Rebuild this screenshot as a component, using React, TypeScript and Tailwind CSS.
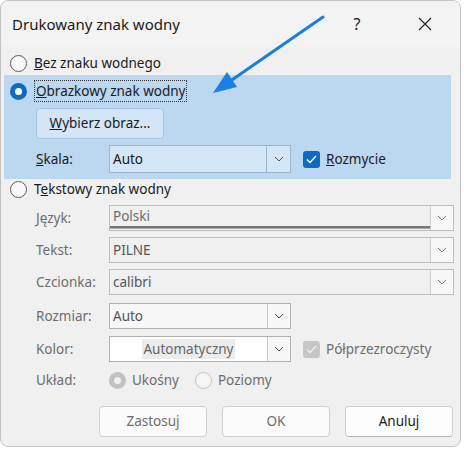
import React from 'react';

const font = { fontFamily: '"Noto Sans", "Open Sans", sans-serif' };

const Chevron = ({ color = '#555' }: { color?: string }) => (
  <svg width="10" height="6" viewBox="0 0 10 6">
    <path d="M1 1 L5 5 L9 1" fill="none" stroke={color} strokeWidth="1" />
  </svg>
);

const Radio = ({ checked, disabled }: { checked?: boolean; disabled?: boolean }) => {
  if (checked && !disabled) {
    return (
      <span className="w-[17px] h-[17px] rounded-full bg-[#0f6cbd] flex items-center justify-center shrink-0">
        <span className="w-[7px] h-[7px] rounded-full bg-white" />
      </span>
    );
  }
  if (checked && disabled) {
    return (
      <span className="w-[17px] h-[17px] rounded-full bg-[#c2c2c2] flex items-center justify-center shrink-0">
        <span className="w-[7px] h-[7px] rounded-full bg-[#f0f0f0]" />
      </span>
    );
  }
  return (
    <span
      className={`block w-[17px] h-[17px] rounded-full border shrink-0 ${disabled ? 'border-[#c2c2c2] bg-[#f5f5f5]' : 'border-[#5c5c5c] bg-[#f8f8f8]'}`}
    />
  );
};

const Label = ({ children }: { children: React.ReactNode }) => (
  <span className="w-[73px] shrink-0 text-[#6d6d6d]">{children}</span>
);

export default function App() {
  return (
    <div className="w-[464px] h-[450px] bg-white relative overflow-hidden text-[13.5px] text-[#1a1a1a]" style={font}>
      <div className="w-[461px] h-[447px] bg-[#f0f0f0] border border-[#c4c4c4] rounded-[8px] flex flex-col overflow-hidden">
        {/* Title bar */}
        <div className="h-[46px] flex items-center bg-[#f3f3f3] shrink-0">
          <span className="pl-[11px] text-[15px] flex-1">Drukowany znak wodny</span>
          <span className="w-[60px] text-center text-[16px] mr-[8px]">?</span>
          <span className="w-[60px] flex justify-center mr-[5px]">
            <svg width="14" height="14" viewBox="0 0 14 14">
              <path d="M1 1 L13 13 M13 1 L1 13" stroke="#222" strokeWidth="1.2" />
            </svg>
          </span>
        </div>

        {/* Body */}
        <div className="flex flex-col">
          <div className="flex items-center h-[22px] mt-[5px] pl-[9px] gap-[7px]">
            <Radio />
            <span><u>B</u>ez znaku wodnego</span>
          </div>

          {/* Highlighted section */}
          <div className="mt-[1px] ml-[3px] w-[447px] h-[104px] bg-[#bcd7f0] flex flex-col">
            <div className="flex items-center h-[24px] mt-[4px] pl-[6px] gap-[7px]">
              <Radio checked />
              <span className="border border-dotted border-[#333] px-[1px] leading-[20px]">
                <u>O</u>brazkowy znak wodny
              </span>
            </div>
            <div className="mt-[5px] ml-[32px] w-[128px] h-[31px] rounded-[4px] border border-[#a9c6e2] bg-[#d3e6f7] flex items-center justify-center">
              <span><u>W</u>ybierz obraz...</span>
            </div>
            <div className="flex items-center mt-[6px] ml-[32px] h-[28px]">
              <span className="w-[73px]"><u>S</u>kala:</span>
              <div className="w-[182px] h-[28px] border border-[#9cb3c9] bg-[#d3e7f9] flex">
                <span className="flex-1 pl-[3px] leading-[26px]">Auto</span>
                <span className="w-[24px] border-l border-[#9cb3c9] flex items-center justify-center">
                  <Chevron />
                </span>
              </div>
              <span className="ml-[12px] w-[17px] h-[17px] rounded-[3px] bg-[#0f6cbd] flex items-center justify-center">
                <svg width="11" height="9" viewBox="0 0 11 9">
                  <path d="M1 4.5 L4 7.5 L10 1" fill="none" stroke="white" strokeWidth="1.3" />
                </svg>
              </span>
              <span className="ml-[6px]"><u>R</u>ozmycie</span>
            </div>
          </div>

          <div className="flex items-center h-[22px] mt-[-1px] pl-[9px] gap-[7px]">
            <Radio />
            <span>T<u>e</u>kstowy znak wodny</span>
          </div>

          {/* Język */}
          <div className="flex items-center mt-[5px] ml-[35px] h-[26px]">
            <Label>Język:</Label>
            <div className="w-[345px] h-[26px] border border-[#bdbdbd] bg-[#f0f0f0] flex">
              <div className="flex-1 flex flex-col">
                <span className="pl-[3px] leading-[20px] text-[#6d6d6d]">Polski</span>
                <span className="h-[3px] border-t-2 border-b border-[#777] border-b-[#aaa]" />
              </div>
              <span className="w-[23px] border-l border-[#d0d0d0] bg-[#f7f7f7] flex items-center justify-center">
                <Chevron color="#777" />
              </span>
            </div>
          </div>

          {/* Tekst */}
          <div className="flex items-center mt-[6px] ml-[35px] h-[26px]">
            <Label>Tekst:</Label>
            <div className="w-[345px] h-[26px] border border-[#bdbdbd] bg-[#f0f0f0] flex">
              <span className="flex-1 pl-[3px] leading-[24px] text-[#555]">PILNE</span>
              <span className="w-[23px] border-l border-[#d0d0d0] bg-[#f7f7f7] flex items-center justify-center">
                <Chevron color="#777" />
              </span>
            </div>
          </div>

          {/* Czcionka */}
          <div className="flex items-center mt-[6px] ml-[35px] h-[26px]">
            <Label>Czcionka:</Label>
            <div className="w-[345px] h-[26px] border border-[#bdbdbd] bg-[#f0f0f0] flex">
              <span className="flex-1 pl-[3px] leading-[24px] text-[#555]">calibri</span>
              <span className="w-[23px] border-l border-[#d0d0d0] bg-[#f7f7f7] flex items-center justify-center">
                <Chevron color="#777" />
              </span>
            </div>
          </div>

          {/* Rozmiar */}
          <div className="flex items-center mt-[8px] ml-[35px] h-[26px]">
            <Label>Rozmiar:</Label>
            <div className="w-[182px] h-[26px] border border-[#b0b0b0] bg-[#f7f7f7] flex">
              <span className="flex-1 pl-[3px] leading-[24px] text-[#555]">Auto</span>
              <span className="w-[23px] border-l border-[#c8c8c8] bg-[#f7f7f7] flex items-center justify-center">
                <Chevron />
              </span>
            </div>
          </div>

          {/* Kolor */}
          <div className="flex items-center mt-[7px] ml-[35px] h-[26px]">
            <Label>Kolor:</Label>
            <div className="w-[182px] h-[26px] border border-[#b0b0b0] bg-white flex">
              <span className="flex-1 flex items-center justify-center">
                <span className="bg-[#ececec] px-[1px] leading-[20px] text-[#666]">Automatyczny</span>
              </span>
              <span className="w-[23px] border-l border-[#c8c8c8] bg-[#f7f7f7] flex items-center justify-center">
                <Chevron />
              </span>
            </div>
            <span className="ml-[12px] w-[17px] h-[17px] rounded-[3px] bg-[#c6c6c6] flex items-center justify-center">
              <svg width="11" height="9" viewBox="0 0 11 9">
                <path d="M1 4.5 L4 7.5 L10 1" fill="none" stroke="#f0f0f0" strokeWidth="1.3" />
              </svg>
            </span>
            <span className="ml-[6px] text-[#6d6d6d]">Półprzezroczysty</span>
          </div>

          {/* Układ */}
          <div className="flex items-center mt-[6px] ml-[35px] h-[24px] text-[#6d6d6d]">
            <Label>Układ:</Label>
            <Radio checked disabled />
            <span className="ml-[6px]">Ukośny</span>
            <span className="ml-[16px]">
              <Radio disabled />
            </span>
            <span className="ml-[6px]">Poziomy</span>
          </div>

          {/* Buttons */}
          <div className="flex mt-[14px] ml-[98px] gap-[15px]">
            <span className="w-[108px] h-[31px] rounded-[4px] border border-[#d0d0d0] bg-[#fbfbfb] flex items-center justify-center text-[#6d6d6d]">
              Zastosuj
            </span>
            <span className="w-[108px] h-[31px] rounded-[4px] border border-[#d0d0d0] bg-[#fbfbfb] flex items-center justify-center text-[#6d6d6d]">
              OK
            </span>
            <span className="w-[108px] h-[31px] rounded-[4px] border border-[#cfcfcf] border-b-[#b5b5b5] bg-[#fdfdfd] flex items-center justify-center">
              Anuluj
            </span>
          </div>
        </div>
      </div>

      {/* Annotation arrow */}
      <svg className="absolute left-0 top-0 pointer-events-none" width="464" height="450">
        <line x1="323" y1="17" x2="226" y2="84" stroke="#1a7fe0" strokeWidth="3" strokeLinecap="round" />
        <polygon points="213,93 227,72 237,87" fill="#1a7fe0" />
      </svg>
    </div>
  );
}
